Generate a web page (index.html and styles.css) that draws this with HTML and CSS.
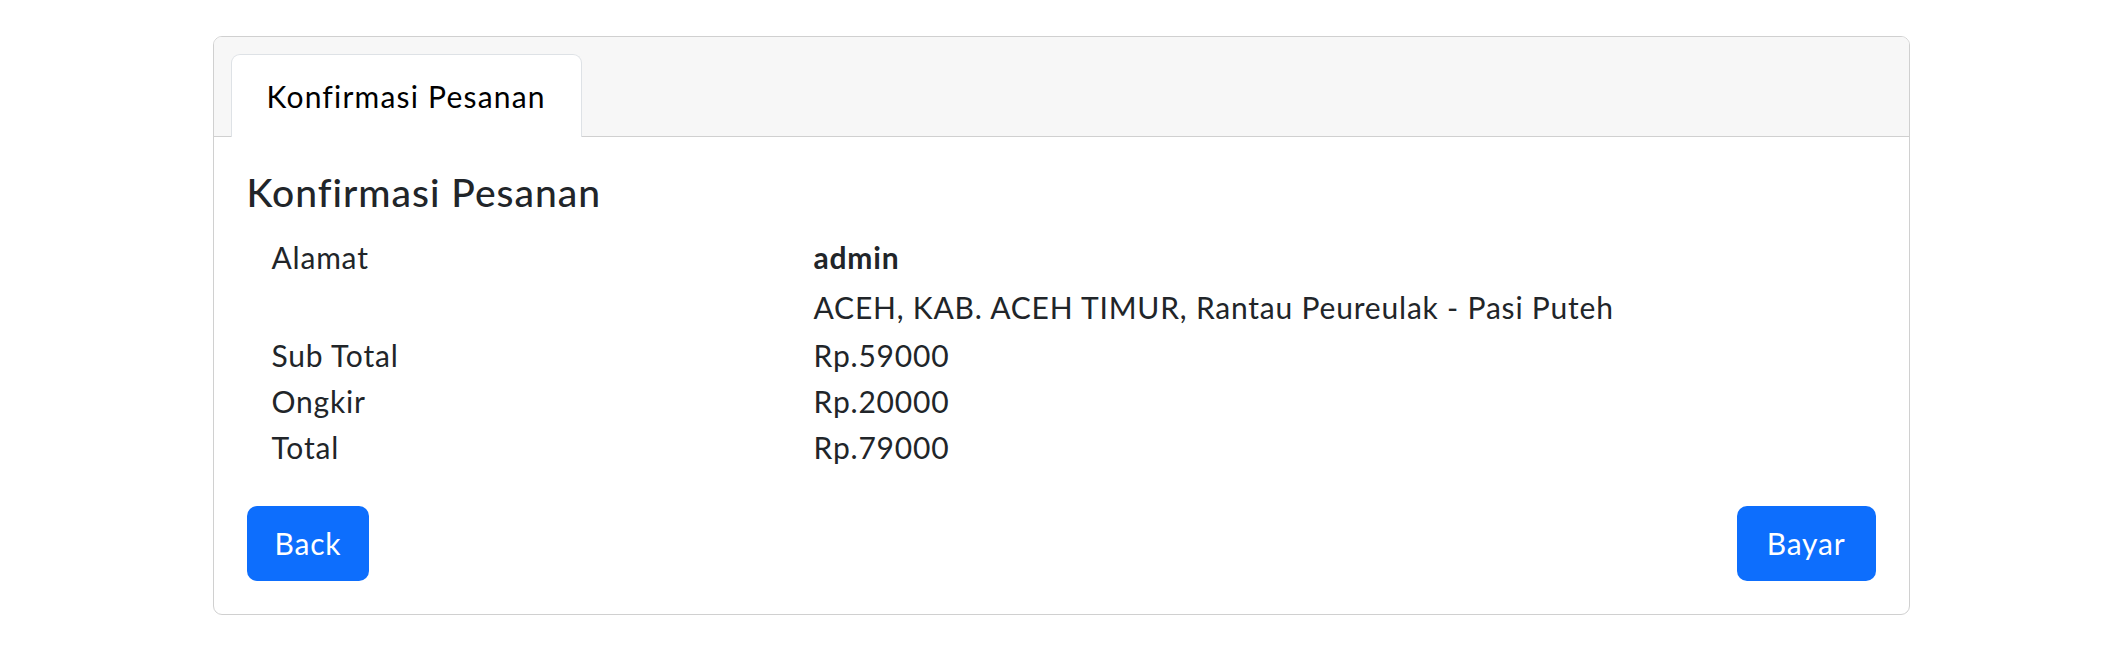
FILE: index.html
```html
<!DOCTYPE html>
<html lang="id">
<head>
<meta charset="utf-8">
<title>Konfirmasi Pesanan</title>
<link rel="stylesheet" href="styles.css">
</head>
<body>
<div class="container">
  <div class="card">
    <div class="card-header">
      <div class="tab">Konfirmasi Pesanan</div>
    </div>
    <div class="card-body">
      <h5 class="title">Konfirmasi Pesanan</h5>
      <div class="rows">
        <div class="label first">Alamat</div>
        <div class="value first"><strong>admin</strong><br>ACEH, KAB. ACEH TIMUR, Rantau Peureulak - Pasi Puteh</div>
        <div class="label">Sub Total</div>
        <div class="value">Rp.59000</div>
        <div class="label">Ongkir</div>
        <div class="value">Rp.20000</div>
        <div class="label">Total</div>
        <div class="value">Rp.79000</div>
      </div>
      <div class="actions">
        <a class="btn btn-back" href="#">Back</a>
        <a class="btn btn-pay" href="#">Bayar</a>
      </div>
    </div>
  </div>
</div>
</body>
</html>
```
FILE: styles.css
```css
html, body {
  margin: 0;
  padding: 0;
  background: #fff;
}
body {
  font-family: Lato, "Noto Sans", sans-serif;
  font-size: 30px;
  letter-spacing: 0.8px;
  color: #212529;
}
.container {
  width: 1697px;
  margin: 36px auto 0;
}
.card {
  border: 1px solid #d0d0d0;
  border-radius: 9px;
  overflow: hidden;
}
.card-header {
  background: #f7f7f7;
  border-bottom: 1px solid #d0d0d0;
  padding: 17px 17px 0;
  display: flex;
}
.tab {
  box-sizing: border-box;
  background: #fff;
  border: 1px solid #dee2e6;
  border-bottom: none;
  border-radius: 9px 9px 0 0;
  padding: 0 35px;
  height: 83px;
  line-height: 82px;
  margin-bottom: -1px;
  letter-spacing: 1.2px;
  color: #000;
}
.card-body {
  padding: 30px 33px 33px;
}
.title {
  margin: 0 0 15px;
  font-size: 39px;
  font-weight: 500;
  line-height: 50px;
  letter-spacing: 1px;
}
.rows {
  display: grid;
  grid-template-columns: 542px 1fr;
  padding-left: 25px;
}
.label, .value {
  line-height: 46px;
}
.label.first, .value.first {
  line-height: 50px;
}
.value strong {
  font-weight: 700;
}
.actions {
  display: flex;
  justify-content: space-between;
  margin-top: 36px;
}
.btn {
  display: inline-block;
  background: #0d6efd;
  color: #fff;
  text-decoration: none;
  height: 75px;
  line-height: 75px;
  padding: 0 28px;
  border-radius: 10px;
  font-size: 30px;
}
.btn-pay {
  padding: 0 30px;
}
```
